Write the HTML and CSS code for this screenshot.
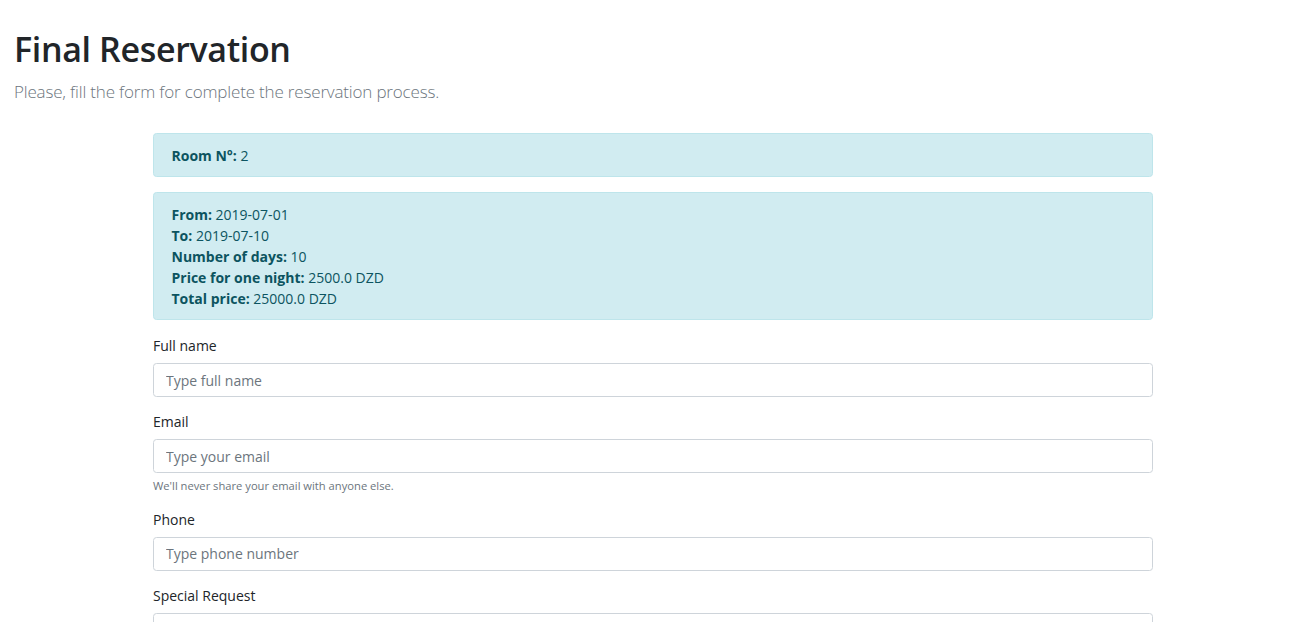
FILE: index.html
```html
<!DOCTYPE html>
<html lang="en">
<head>
<meta charset="utf-8">
<title>Final Reservation</title>
<link rel="stylesheet" href="styles.css">
</head>
<body>
<header class="page-head">
  <h1 class="title">Final Reservation</h1>
  <p class="lead">Please, fill the form for complete the reservation process.</p>
</header>
<main class="content">
  <div class="alert">
    <b>Room N°:</b> 2
  </div>
  <div class="alert">
    <b>From:</b> 2019-07-01<br>
    <b>To:</b> 2019-07-10<br>
    <b>Number of days:</b> 10<br>
    <b>Price for one night:</b> 2500.0 DZD<br>
    <b>Total price:</b> 25000.0 DZD
  </div>
  <form class="form">
    <div class="form-group">
      <label class="label" for="name">Full name</label>
      <input class="control" id="name" type="text" placeholder="Type full name">
    </div>
    <div class="form-group">
      <label class="label" for="email">Email</label>
      <input class="control" id="email" type="email" placeholder="Type your email">
      <small class="help">We'll never share your email with anyone else.</small>
    </div>
    <div class="form-group">
      <label class="label" for="phone">Phone</label>
      <input class="control" id="phone" type="text" placeholder="Type phone number">
    </div>
    <div class="form-group">
      <label class="label" for="req">Special Request</label>
      <textarea class="control area" id="req" rows="3"></textarea>
    </div>
  </form>
</main>
</body>
</html>
```
FILE: styles.css
```css
* { box-sizing: border-box; }
html { font-size: 14px; }
body {
  margin: 0;
  font-family: "Open Sans", "Noto Sans", sans-serif;
  font-size: 14px;
  line-height: 1.5;
  color: #212529;
  background: #fff;
}
.page-head {
  padding: 29px 15px 0 14px;
}
.title {
  margin: 0 0 9px;
  font-size: 34px;
  font-weight: 600;
  letter-spacing: -0.35px;
  line-height: 1.2;
  color: #212529;
}
.lead {
  margin: 0 0 14px;
  font-size: 17px;
  font-weight: 300;
  letter-spacing: -0.17px;
  color: #6c757d;
}
.content {
  margin: 0 154px 0 153px;
  padding-top: 15px;
}
.alert {
  background: #d1ecf1;
  border: 1px solid #bee5eb;
  color: #0c5460;
  border-radius: 3.5px;
  padding: 10.5px 17.5px;
  margin-bottom: 15px;
}
.alert b { font-weight: 700; }
.form-group {
  margin-bottom: 14px;
}
.label {
  display: inline-block;
  margin-bottom: 7px;
}
.control {
  display: block;
  width: 100%;
  height: 34px;
  padding: 5px 12px;
  font: inherit;
  color: #495057;
  border: 1px solid #ced4da;
  border-radius: 3.5px;
  background: #fff;
}
.control::placeholder { color: #6c757d; opacity: 1; }
.area { height: 80px; resize: vertical; }
.help {
  display: block;
  margin-top: 4.5px;
  font-size: 11.2px;
  color: #6c757d;
}
```
